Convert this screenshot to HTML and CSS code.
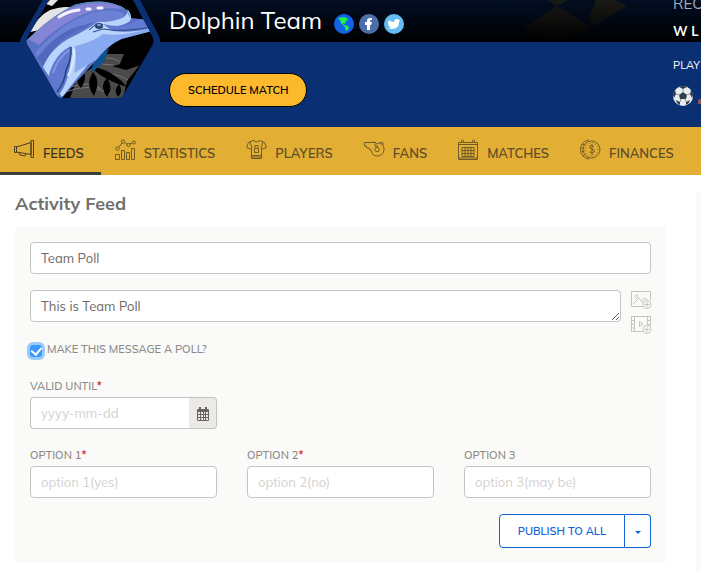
FILE: index.html
```
<!DOCTYPE html>
<html lang="en">
<head>
  <meta charset="UTF-8">
  <meta name="viewport" content="width=device-width, initial-scale=1">
  <title>Dolphin Team - Activity Feed</title>
  <link rel="stylesheet" href="styles.css">
</head>
<body>
  <header class="hero">
    <svg class="cover-pattern" viewBox="0 0 104 42" aria-hidden="true">
      <defs>
        <linearGradient id="gold" x1="0" y1="0" x2="0" y2="42" gradientUnits="userSpaceOnUse">
          <stop offset="0" stop-color="#2a230f"/>
          <stop offset="1" stop-color="#000"/>
        </linearGradient>
      </defs>
      <path d="M33 6l34 21-25 15H22L0 28z" fill="url(#gold)"/>
      <path d="M33 6L24 0h20z" fill="url(#gold)"/>
      <path d="M33 7l34 21 22-14L74 0H44z" fill="#0b0d13" opacity=".4"/>
      <path d="M72 0h20l11 6-36 21-1-10z" fill="url(#gold)"/>
    </svg>
    <svg class="crest" viewBox="0 0 160 100" role="img" aria-label="Dolphin Team crest">
      <defs>
        <clipPath id="crest-clip">
          <path d="M49 0h84l20 38q1 3 0 6l-29 50q-2 4-6 4H62q-4 0-6-4L27 44q-1-3 0-6z"/>
        </clipPath>
      </defs>
      <path d="M44 -2h95l20 38q1 4 2 6H20q0-3 2-6z" fill="#0b2f73"/>
      <g clip-path="url(#crest-clip)">
        <path d="M20 0h140v100H20z" fill="#000"/>
        <path d="M46 4L50 0h8l-6 6zM30 32q8-16 20-22 16-5 22-2-18 6-32 22z" fill="#e4e4e4"/>
        <path d="M70 98l8-21 20-13 8-10h18l-5 12h20l-12 15-4 17z" fill="#4a4a4a"/>
        <path d="M106 58q10 0 14 4M102 64q12 0 20 4M66 92q22-10 44 2M70 87q20-7 31 2M112 74q10 2 16 6" stroke="#777" fill="none"/>
        <path d="M81 68q8 8 0 20-6-6-3-14zM93 72q8 9 1 24-7-9-4-18zM107 78q7 10 0 19-6-8-3-15zM119 84q5 7-1 13-4-7-1-10zM96 67q20 6 31 20-20-6-32-16zM112 66l10-2 16 2-12 4z" fill="#000"/>
        <path d="M109 48l-5 14-13 11 3-14z" fill="#0c538f"/>
        <path d="M24 42L36 33Q53 15 75 5 102-3 122 7q8 5 9 11l17 2 9 5v4q-20 6-35 10-12 5-22 17L80 78 60 100H52L20 42z" fill="#5a72c6"/>
        <path d="M28 39Q62 4 95 3q21-1 27 6-21-3-45 8-24 13-38 28l-7-4z" fill="#8684d6"/>
        <path d="M35 53Q64 20 95 12q17-4 28 1 4 7-14 8-13 1-22 7-31 10-46 37z" fill="#6c80d6"/>
        <path d="M37 58Q58 30 84 25l10-3-8 6Q56 37 43 66z" fill="#5068bd"/>
        <path d="M43 67Q52 46 74 36q14-7 24-14 18 0 26-5 5-4 3-8 6 6 3 12-6 5-20 6 14 5 45-2v5l-36 8q-15 6-29 24L62 97z" fill="#b8d3fc"/>
        <path d="M75 46q18-4 28-12 22 3 46-6l8 2q-22 5-36 9-13 6-25 21L74 73q3-14 1-27z" fill="#88a9ef"/>
        <path d="M71 46q-17 8-23 32l9 19q15-16 14-51z" fill="#6078d0"/>
        <path d="M53 73q4-14 16-23" stroke="#8397e4" fill="none" stroke-width="2"/>
        <path d="M71 47q1 12-5 23-1 12-9 22" stroke="#1c477b" fill="none" stroke-width="1.500"/>
        <path d="M74 49q1 13-6 27" stroke="#dcebff" fill="none" stroke-width="2"/>
        <path d="M103 24q22 6 37-5l17 3v4q-25 8-44 5-5-3-10-7z" fill="#627bd2"/>
        <path d="M93 32l10-3q20 4 54-3" stroke="#2c457f" fill="none"/>
        <path d="M89 30l5-4M94 26q4-4 9-1" stroke="#2c457f" fill="none"/>
        <ellipse cx="99" cy="26" rx="4" ry="3" fill="#2f4674"/>
        <ellipse cx="99" cy="25" rx="2" ry="1" fill="#8fadd9"/>
        <path d="M59 17Q68 11 79 10M87 9h3M98 8h4" stroke="#f4f3ff" stroke-width="3" stroke-linecap="round" fill="none"/>
        <path d="M25 42L37 33Q54 15 75 5 102-2 122 7q7 4 8 10" stroke="#5e94c8" fill="none"/>
      </g>
    </svg>
    <div class="team">
      <div class="team-heading">
        <h1>Dolphin Team</h1>
        <nav class="social" aria-label="Social links">
          <a href="#" aria-label="Website">
            <svg viewBox="0 0 20 20">
              <circle cx="10" cy="10" r="10" fill="#1263e5"/>
              <path d="M5 4l5-1 3 1 1 2-2 1-1 3-2-1 1 2 2 1-1 1-4-4-1-3-2-1zM12 11l3 2-1 3-2 1-1-4z" fill="#22ef4a"/>
            </svg>
          </a>
          <a href="#" aria-label="Facebook">
            <svg viewBox="0 0 20 20">
              <circle cx="10" cy="10" r="10" fill="#4d6fa9"/>
              <path d="M8 16v-5H6V8h2V7q0-3 3-3h2v2h-1q-1 0-1 1v1h2l-1 3h-1v5z" fill="#fff"/>
            </svg>
          </a>
          <a href="#" aria-label="Twitter">
            <svg viewBox="0 0 20 20">
              <circle cx="10" cy="10" r="10" fill="#65bbf2"/>
              <path d="M5 6q2 2 5 2 0-3 3-3 1 0 2 1h1l-1 2q0 7-7 7-2 0-4-1 2 0 3-1-2 0-3-2h1q-1-1-1-3z" fill="#fff"/>
            </svg>
          </a>
        </nav>
      </div>
      <button class="schedule" type="button">SCHEDULE MATCH</button>
    </div>
    <div class="record">
      <p class="record-title">REC</p>
      <p class="record-result">W L</p>
      <p class="record-label">PLAY</p>
      <div class="record-icons">
        <svg viewBox="0 0 20 20" role="img" aria-label="Football">
          <circle cx="10" cy="10" r="10" fill="#e9edf0"/>
          <path d="M10 6l4 3-1 4H7L6 9zM6 1q4-2 8 0l-4 2zM0 9q0-3 2-5l1 4-2 4zM20 9q0-3-2-5l-1 4 2 4zM3 14l4 2v3q-3-1-4-5zM17 14l-4 2v3q3-1 4-5z" fill="#303d48"/>
          <path d="M10 3v4M3 8l4 1M17 8l-4 1M8 13l-1 3M12 13l1 3" stroke="#8b969f" fill="none"/>
        </svg>
        <svg viewBox="0 0 20 20" role="img" aria-label="Boot">
          <path d="M0 14l4-2V4l5 1 3 7 8 3v3H0z" fill="#82594d"/>
        </svg>
      </div>
    </div>
  </header>

  <nav class="tabs" aria-label="Team">
    <a class="tab active" href="#">
      <svg viewBox="0 0 21 21"><path d="M.5 7.500h2v6h-2zM2.500 8L17 3.500v12L2.500 13M17 1.500h2.500v17H17zM5 14l1 2 5 1 1-2"/></svg>
      <span>FEEDS</span>
    </a>
    <a class="tab" href="#">
      <svg viewBox="0 0 21 21"><path d="M.5 15.500h4v5h-4zM6.500 11.500h3v9h-3zM11.500 13.500h3v7h-3zM16.500 9.500h3v11h-3zM4 8l3-4M9.500 3.500l3 2M14.500 5l3-1"/><circle cx="2.500" cy="9.500" r="1.700"/><circle cx="8" cy="2.500" r="1.700"/><circle cx="13.500" cy="6" r="1.700"/><circle cx="19" cy="3.500" r="1.500"/></svg>
      <span>STATISTICS</span>
    </a>
    <a class="tab" href="#">
      <svg viewBox="0 0 21 21"><path d="M7 1.500L2.500 3.500.5 8.500 4.500 10l1-1v10.500h10V9l1 1 4-1.500-2-5L14 1.500q-3.500 3-7 0zM5.500 16.500h10M5.500 18h10M4 3l2 6M17 3l-2 6"/><path d="M9 6.500h3v3H9zM8.500 9.500h4v4h-4z"/></svg>
      <span>PLAYERS</span>
    </a>
    <a class="tab" href="#">
      <svg viewBox="0 0 21 21"><path d="M.5 3.500h11l1 1.500 3-1q5 2 4.500 7-1 6-7 6-5 0-6-6H6l-1-2H3l-1-2H.5zM11 4.500V7h3M9 3.500l1-1M16 4l1-1 2 1v2"/><circle cx="13" cy="10.500" r="2.200"/></svg>
      <span>FANS</span>
    </a>
    <a class="tab" href="#">
      <svg viewBox="0 0 21 21"><path d="M.5 3.500h3M5.500 3.500h9M16.500 3.500h3v17H.5v-17M.5 5.500h19M.5 19h19M3.500 1.500q1-1.500 2 0v2h-2zM14.500 1.500q1-1.500 2 0v2h-2zM4 8.500h12v9H4zM7 8.500v9M10 8.500v9M13 8.500v9M4 11.500h12M4 14.500h12"/></svg>
      <span>MATCHES</span>
    </a>
    <a class="tab" href="#">
      <svg viewBox="0 0 21 21"><circle cx="11.500" cy="10.500" r="8.500"/><circle cx="11.500" cy="10.500" r="6.500" stroke-dasharray="1 2"/><path d="M9 .8Q.5 3 .5 10.500T9 20.200M2 5l3 1M1 9l2 .5M1 13l2-.5M3 17l2-2M14 7.500q-4-2-4.500.5 0 1.500 2 2 3 .5 3 2.500-1 2-5 .5M12 5v11"/></svg>
      <span>FINANCES</span>
    </a>
  </nav>

  <div class="page">
    <main class="feed">
      <h2>Activity Feed</h2>
      <form class="composer">
        <input class="control" type="text" value="Team Poll" aria-label="Title">
        <div class="message">
          <textarea class="control" rows="1" aria-label="Message">This is Team Poll</textarea>
          <div class="attach">
            <button type="button" aria-label="Add image">
              <svg viewBox="0 0 20 20"><path d="M13 16.500H.5v-15h19V10M2 14l6-6 5 6M11 10.500L14 8l3 2.500"/><circle cx="5.500" cy="6.500" r="1.500"/><circle cx="16" cy="14.500" r="4"/><path d="M16 12v5M13.500 14.500h5"/></svg>
            </button>
            <button type="button" aria-label="Add video">
              <svg viewBox="0 0 20 20"><path d="M13 16.500H.5v-15h19V11M3.500 1.500v15M16.500 1.500V10M.5 5.500h3M.5 9.500h3M.5 13h3M16.500 5.500h3M16.500 9.500h3M8.500 6.500v5L12 9z"/><circle cx="16" cy="14.500" r="4"/><path d="M16 12v5M13.500 14.500h5"/></svg>
            </button>
          </div>
        </div>
        <div class="poll-toggle">
          <input type="checkbox" id="is-poll" checked>
          <label for="is-poll">MAKE THIS MESSAGE A POLL?</label>
        </div>
        <div class="fields">
          <div class="field">
            <label for="valid-until">VALID UNTIL<span class="required">*</span></label>
            <div class="date-group">
              <input class="control" type="text" id="valid-until" placeholder="yyyy-mm-dd">
              <button type="button" aria-label="Choose date">
                <svg viewBox="0 0 12 14"><path d="M1 2h10q1 0 1 1v10q0 1-1 1H1q-1 0-1-1V3q0-1 1-1z" fill="#686461"/><path d="M1 5h2v2H1zM4 5h2v2H4zM7 5h1v2H7zM9 5h2v2H9zM1 8h2v2H1zM4 8h2v2H4zM7 8h1v2H7zM9 8h2v2H9zM1 11h2v2H1zM4 11h2v2H4zM7 11h1v2H7zM9 11h2v2H9z" fill="#ebeae8"/><path d="M3 0v4M9 0v4" stroke="#686461" stroke-width="2"/></svg>
              </button>
            </div>
          </div>
        </div>
        <div class="fields">
          <div class="field">
            <label for="option-1">OPTION 1<span class="required">*</span></label>
            <input class="control" type="text" id="option-1" placeholder="option 1(yes)">
          </div>
          <div class="field">
            <label for="option-2">OPTION 2<span class="required">*</span></label>
            <input class="control" type="text" id="option-2" placeholder="option 2(no)">
          </div>
          <div class="field">
            <label for="option-3">OPTION 3</label>
            <input class="control" type="text" id="option-3" placeholder="option 3(may be)">
          </div>
        </div>
        <div class="publish">
          <button class="publish-main" type="button">PUBLISH TO ALL</button>
          <button class="publish-more" type="button" aria-label="More publish options"><span class="caret"></span></button>
        </div>
      </form>
    </main>
    <aside class="sidebar"></aside>
  </div>
</body>
</html>
```

FILE: styles.css
```
* {
  box-sizing: border-box;
}
body {
  margin: 0;
  font-family: Muli, Mulish, "Open Sans", sans-serif;
  font-size: 13px;
  line-height: 18px;
  color: #6b6966;
  background: #fff;
  overflow-x: hidden;
}
h1, h2, p {
  margin: 0;
}
button, input, textarea {
  font-family: inherit;
}
button {
  cursor: pointer;
}
svg {
  display: block;
}

/* hero */
.hero {
  display: flex;
  position: relative;
  min-height: 127px;
  overflow: hidden;
  color: #fff;
  background: linear-gradient(#020e23, #000 42px, #0b2f73 42px);
}
.cover-pattern {
  position: absolute;
  top: 0;
  right: 73px;
  width: 104px;
  opacity: .6;
}
.crest {
  position: relative;
  flex: none;
  width: 160px;
  height: 100px;
}
.team {
  position: relative;
  flex: 1;
  padding: 3px 0 0 9px;
}
.team-heading {
  display: flex;
  align-items: center;
  gap: 12px;
}
h1 {
  font-size: 24px;
  line-height: 34px;
  font-weight: 400;
}
.social {
  display: flex;
  gap: 5px;
  padding-top: 8px;
}
.social svg {
  width: 20px;
  height: 20px;
}
.schedule {
  height: 34px;
  margin-top: 36px;
  padding: 0 18px;
  border: 1px solid #000;
  border-radius: 17px;
  background: #fdb92c;
  color: #000;
  font-size: 11px;
  font-weight: 600;
}
.record {
  flex: none;
  width: 28px;
  white-space: nowrap;
}
.record-title {
  margin-top: -6px;
  font-size: 15px;
  line-height: 20px;
  color: #a7abb3;
}
.record-result {
  margin-top: 8px;
  font-size: 13px;
  font-weight: 700;
}
.record-label {
  margin-top: 16px;
  font-size: 11px;
}
.record-icons {
  display: flex;
  gap: 5px;
  margin-top: 12px;
}
.record-icons svg {
  flex: none;
  width: 20px;
  height: 20px;
}

/* tabs */
.tabs {
  display: flex;
  height: 48px;
  background: #e2ae34;
}
.tab {
  display: flex;
  gap: 8px;
  padding: 12px 17px 0 14px;
  border-bottom: 3px solid transparent;
  color: #5e4e29;
  font-size: 13px;
  font-weight: 600;
  text-decoration: none;
}
.tab span {
  padding-top: 5px;
}
.tab svg {
  flex: none;
  width: 21px;
  height: 21px;
  fill: none;
  stroke: #715b28;
}
.tab.active {
  border-color: #3f3d39;
  color: #3b3425;
}
.tab.active svg {
  stroke: #4b3f24;
}

/* content */
.page {
  display: flex;
  gap: 30px;
  padding: 16px 0 0 15px;
}
.feed {
  flex: 1;
  min-width: 0;
}
h2 {
  margin-bottom: 10px;
  font-size: 18px;
  line-height: 26px;
  font-weight: 700;
  color: #72706d;
}
.sidebar {
  flex: none;
  width: 5px;
  min-height: 380px;
  background: #fafaf8;
}
.composer {
  display: flex;
  flex-direction: column;
  gap: 16px;
  padding: 15px;
  background: #fafaf8;
}
.control {
  display: block;
  width: 100%;
  height: 32px;
  padding: 6px 10px;
  border: 1px solid #c5c4c2;
  border-radius: 4px;
  background: #fff;
  color: #6b6966;
  font-size: 13px;
  line-height: 18px;
}
.control::placeholder {
  color: #d3d2d1;
}
.message {
  display: flex;
  gap: 10px;
  height: 32px;
}
textarea.control {
  flex: 1;
  resize: vertical;
  overflow: hidden;
}
.attach {
  display: flex;
  flex-direction: column;
  gap: 5px;
}
.attach button {
  padding: 0;
  border: 0;
  background: none;
}
.attach svg {
  width: 20px;
  height: 20px;
  fill: #fafaf8;
  stroke: #c5c4c2;
  overflow: visible;
}
.poll-toggle {
  display: flex;
  gap: 5px;
  height: 22px;
  line-height: 22px;
}
.poll-toggle input {
  appearance: none;
  display: flex;
  justify-content: center;
  align-items: center;
  width: 12px;
  height: 12px;
  margin: 7px 0 0;
  border-radius: 3px;
  background: #3b99fc;
  box-shadow: 0 0 0 3px #9dcbf8;
}
.poll-toggle input:checked::after {
  content: "";
  width: 5px;
  height: 8px;
  margin-bottom: 2px;
  border: solid #fff;
  border-width: 0 2px 2px 0;
  transform: rotate(40deg);
}
label {
  font-size: 11px;
  font-weight: 500;
  color: #8b8986;
}
.fields {
  display: grid;
  grid-template-columns: repeat(3, 1fr);
  gap: 30px;
}
.field label {
  display: block;
  padding-top: 1px;
  margin-bottom: 2px;
}
.required {
  color: #d0021b;
}
.date-group {
  display: flex;
}
.date-group .control {
  flex: 1;
  min-width: 0;
  border-right: 0;
  border-radius: 4px 0 0 4px;
}
.date-group button {
  display: flex;
  align-items: center;
  justify-content: center;
  flex: none;
  width: 28px;
  padding: 2px 0 0;
  border: 1px solid #c5c4c2;
  border-left: 0;
  border-radius: 0 4px 4px 0;
  background: #ebeae8;
}
.date-group svg {
  width: 12px;
  height: 14px;
}
.publish {
  display: flex;
  justify-content: flex-end;
}
.publish button {
  height: 34px;
  border: 1px solid #1263d8;
  background: #fff;
  color: #1263d8;
  font-size: 11px;
  font-weight: 600;
}
.publish .publish-main {
  padding: 0 18px;
  border-radius: 4px 0 0 4px;
}
.publish .publish-more {
  width: 26px;
  padding: 0;
  border-left: 0;
  border-radius: 0 4px 4px 0;
}
.caret {
  display: inline-block;
  border: 3px solid transparent;
  border-top-color: #1263d8;
  border-bottom: 0;
  vertical-align: middle;
}
```
